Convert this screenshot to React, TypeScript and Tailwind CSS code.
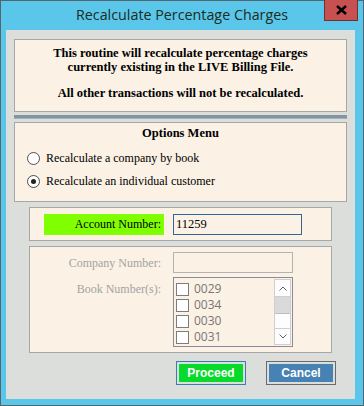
import React, { useState } from 'react';

const books = ['0029', '0034', '0030', '0031'];

const App: React.FC = () => {
  const [mode, setMode] = useState<'book' | 'customer'>('customer');
  const [account, setAccount] = useState('11259');

  return (
    <div className="w-[364px] h-[406px] bg-[#5ac7ea] border border-[#55656e] flex flex-col font-['Liberation_Serif',serif] text-[12px] text-black">
      {/* title bar */}
      <div className="relative h-[29px] flex items-center justify-center">
        <span className="font-['Open_Sans',sans-serif] text-[14.3px] text-[#1b2b22] mt-[-2px]">Recalculate Percentage Charges</span>
        <button className="absolute right-[5px] top-[-1px] w-[34px] h-[21px] bg-[#c75050] border border-[#6f3030] border-t-0 flex items-center justify-center">
          <svg width="11" height="10" viewBox="0 0 11 10">
            <path d="M1 1 L10 9 M10 1 L1 9" stroke="#000" strokeWidth="2.4" />
          </svg>
        </button>
      </div>

      {/* client area */}
      <div className="flex-1 ml-[5px] mr-[8px] mb-[6px] bg-[#dcdedb] px-[8px] pt-[9px] flex flex-col">
        <div className="border border-[#a7a7a7] bg-[#fbf1e4] h-[73px] pt-[6px] text-center font-bold text-[12.5px] leading-[14px]">
          <p>This routine will recalculate percentage charges</p>
          <p>currently existing in the LIVE Billing File.</p>
          <p className="mt-[12px]">All other transactions will not be recalculated.</p>
        </div>

        <div className="mt-[3px] h-[4px] bg-[#8494a0] border-b border-[#a3b0ba]" />

        <div className="mt-[3px] border border-[#a7a7a7] bg-[#fbf1e4] h-[80px] px-[12px]">
          <p className="text-center font-bold text-[12.5px] mt-[2px] leading-[16px]">Options Menu</p>
          <label className="flex items-center gap-[6px] mt-[9px] h-[16px]" onClick={() => setMode('book')}>
            <span className="w-[13px] h-[13px] rounded-full border border-[#4d4d4d] bg-white flex items-center justify-center">
              {mode === 'book' && <span className="w-[5px] h-[5px] rounded-full bg-[#222]" />}
            </span>
            <span>Recalculate a company by book</span>
          </label>
          <label className="flex items-center gap-[6px] mt-[7px] h-[16px]" onClick={() => setMode('customer')}>
            <span className="w-[13px] h-[13px] rounded-full border border-[#4d4d4d] bg-white flex items-center justify-center">
              {mode === 'customer' && <span className="w-[5px] h-[5px] rounded-full bg-[#222]" />}
            </span>
            <span>Recalculate an individual customer</span>
          </label>
        </div>

        <div className="mt-[5px] mx-[15px] border border-[#a7a7a7] bg-[#fbf1e4] h-[34px] flex items-center pl-[14px]">
          <div className="w-[120px] h-[21px] bg-[#80ff00] flex items-center justify-end pr-[3px]">Account Number:</div>
          <input
            value={account}
            onChange={(e) => setAccount(e.target.value)}
            className="ml-[9px] w-[129px] h-[21px] border border-[#336699] bg-[#fbf1e4] px-[2px] outline-none font-['Liberation_Serif',serif] text-[12.5px]"
          />
        </div>

        <div className="mt-[5px] mx-[15px] border border-[#a7a7a7] bg-[#fbf1e4] h-[107px] pl-[14px] pt-[5px] text-[#a3a3a3]">
          <div className="flex items-center">
            <div className="w-[120px] text-right pr-[3px]">Company Number:</div>
            <div className="ml-[9px] w-[120px] h-[21px] border border-[#b3b3b3]" />
          </div>
          <div className="flex items-start mt-[4px]">
            <div className="w-[120px] text-right pr-[3px] mt-[3px]">Book Number(s):</div>
            <div className="ml-[9px] w-[120px] h-[70px] border border-[#8a8a9c] flex overflow-hidden">
              <div className="flex-1 pl-[2px] pt-[3px] font-['Open_Sans',sans-serif] text-[12px] text-[#777]">
                {books.map((b) => (
                  <div key={b} className="flex items-center h-[16px] gap-[5px]">
                    <span className="w-[13px] h-[13px] border border-[#7d7d7d] bg-white" />
                    <span>{b}</span>
                  </div>
                ))}
                <div className="flex items-center h-[16px]">
                  <span className="w-[13px] h-[13px] border border-[#7d7d7d] bg-white" />
                </div>
              </div>
              <div className="w-[17px] my-[1px] mr-[1px] bg-[#fdfdfd] border border-[#cfcfcf] flex flex-col">
                <div className="h-[17px] flex items-center justify-center border-b border-[#cfcfcf]">
                  <svg width="8" height="5" viewBox="0 0 8 5"><path d="M0.5 4.5 L4 1 L7.5 4.5" stroke="#606060" fill="none" /></svg>
                </div>
                <div className="h-[17px] bg-[#dadada] border-b border-[#bdbdbd]" />
                <div className="flex-1" />
                <div className="h-[16px] flex items-center justify-center border-t border-[#cfcfcf]">
                  <svg width="8" height="5" viewBox="0 0 8 5"><path d="M0.5 0.5 L4 4 L7.5 0.5" stroke="#606060" fill="none" /></svg>
                </div>
              </div>
            </div>
          </div>
        </div>

        <div className="flex justify-end gap-[20px] mt-[8px] mr-[11px] font-['Liberation_Sans',sans-serif] font-bold text-[12px] text-white">
          <button className="w-[70px] h-[24px] border border-[#3a7db4] p-[2px]">
            <span className="block w-full h-full bg-[#06da2a] leading-[18px]">Proceed</span>
          </button>
          <button className="w-[70px] h-[24px] border border-[#6a6a6a] p-[2px]">
            <span className="block w-full h-full bg-[#4682b4] leading-[18px]">Cancel</span>
          </button>
        </div>
      </div>
    </div>
  );
};

export default App;
